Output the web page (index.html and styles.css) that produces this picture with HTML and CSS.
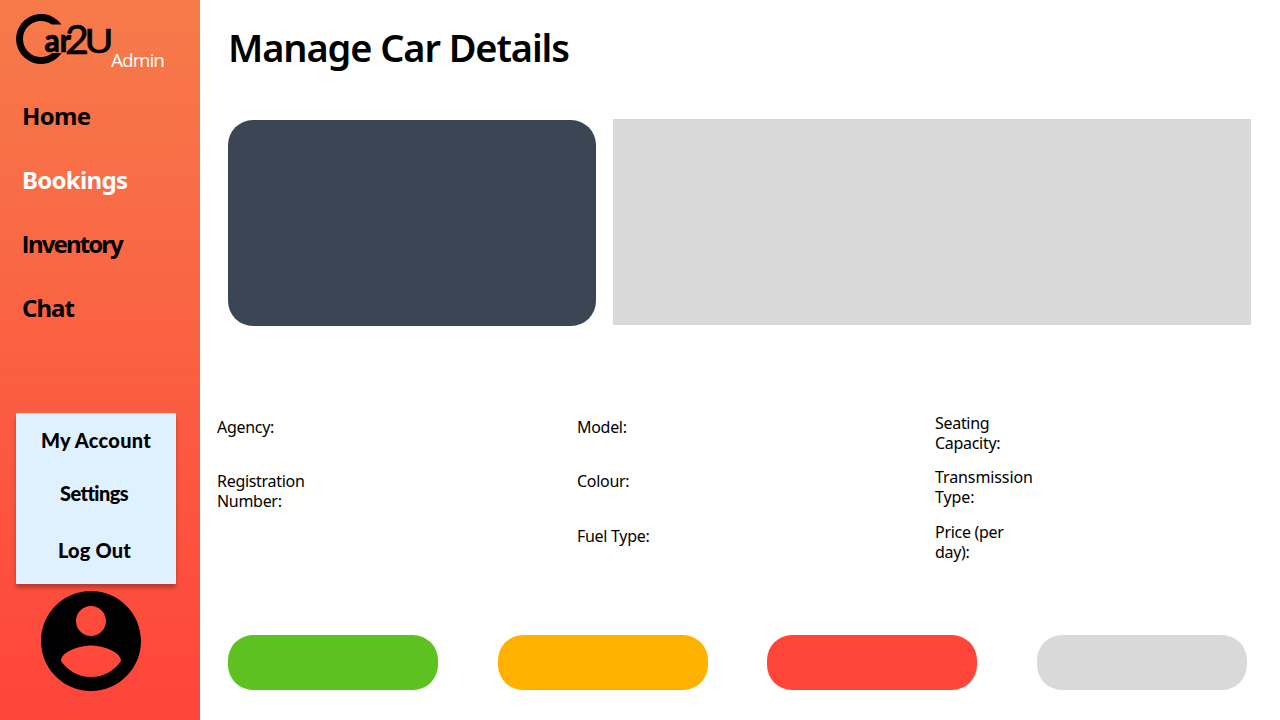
FILE: index.html
```html
<!DOCTYPE html>
<html lang="en">
<head>
<meta charset="utf-8">
<title>Manage Car Details</title>
<link rel="stylesheet" href="styles.css">
</head>
<body>
<div class="app">
  <aside class="sidebar">
    <header class="brand">
      <svg class="logo" width="97" height="52" viewBox="0 0 97 52" role="img" aria-label="Car2U">
        <path class="ring" d="M46.4 11.5H36.7A18 18 0 1 0 37.3 40H46.7A25 25 0 1 1 46.4 11.5Z"/>
        <text class="mark mark-heavy" x="29.5" y="39" font-size="32" textLength="26.5" lengthAdjust="spacingAndGlyphs">ar</text>
        <text class="mark" x="50" y="40.5" font-size="40" textLength="24" lengthAdjust="spacingAndGlyphs">2</text>
        <text class="mark" x="69.5" y="40" font-size="33" textLength="29" lengthAdjust="spacingAndGlyphs">U</text>
      </svg>
      <span class="role">Admin</span>
    </header>
    <nav class="nav">
      <a class="nav-item home">Home</a>
      <a class="nav-item active">Bookings</a>
      <a class="nav-item inventory"><span class="initial">I</span>nventory</a>
      <a class="nav-item chat">Chat</a>
    </nav>
    <div class="account-menu">
      <a class="menu-item account">My Account</a>
      <a class="menu-item settings">Settings</a>
      <a class="menu-item logout">Log Out</a>
    </div>
    <svg class="avatar" width="100" height="100" viewBox="2 2 20 20">
      <path d="M12 2C6.48 2 2 6.48 2 12s4.48 10 10 10 10-4.48 10-10S17.52 2 12 2zm0 3c1.66 0 3 1.34 3 3s-1.34 3-3 3-3-1.34-3-3 1.34-3 3-3zm0 14.2c-2.5 0-4.71-1.28-6-3.22.03-1.99 4-3.08 6-3.08 1.99 0 5.97 1.09 6 3.08-1.29 1.94-3.5 3.22-6 3.22z"/>
    </svg>
  </aside>
  <main class="content">
    <h1 class="title">Manage Car Details</h1>
    <section class="media">
      <div class="photo"></div>
      <div class="summary"></div>
    </section>
    <section class="details">
      <div class="column">
        <div class="field">Agency:</div>
        <div class="field">Registration<br>Number:</div>
      </div>
      <div class="column">
        <div class="field">Model:</div>
        <div class="field">Colour:</div>
        <div class="field">Fuel Type:</div>
      </div>
      <div class="column raised">
        <div class="field">Seating<br>Capacity:</div>
        <div class="field transmission">Transmission<br>Type:</div>
        <div class="field">Price (per<br>day):</div>
      </div>
    </section>
    <section class="actions">
      <div class="button green"></div>
      <div class="button amber"></div>
      <div class="button red"></div>
      <div class="button grey"></div>
    </section>
  </main>
</div>
</body>
</html>
```

FILE: styles.css
```css
* { box-sizing: border-box; }
body { margin: 0; background: #fff; color: #000; font-family: "Noto Sans", "Open Sans", sans-serif; }
.app { display: flex; width: 1280px; height: 720px; overflow: hidden; }
.sidebar { display: flex; flex-direction: column; width: 200px; height: 720px; background: linear-gradient(180deg, #f67b4a 0%, #ff443a 100%); }
.brand { display: flex; align-items: flex-start; height: 84px; padding: 13px 0 0 15px; }
.logo { flex: none; overflow: visible; }
.ring { fill: #000; }
.mark { font-family: Lato, sans-serif; font-weight: 400; fill: #000; stroke: #000; stroke-width: .6; }
.mark-heavy { font-weight: 900; }
.role { margin: 33px 0 0 -1px; color: #fff; font-family: "Open Sans", sans-serif; font-size: 19px; font-weight: 400; line-height: 28px; letter-spacing: -.95px; }
.nav { display: flex; flex-direction: column; height: 329px; padding-left: 22px; }
.nav-item { height: 64px; font-size: 24px; font-weight: 700; line-height: 64px; }
.home { letter-spacing: -.7px; }
.active { color: #fff; letter-spacing: -.7px; }
.inventory { letter-spacing: -1.9px; }
.initial { font-family: Roboto, sans-serif; line-height: 1; letter-spacing: -1px; }
.chat { letter-spacing: -1px; }
.account-menu { display: flex; flex-direction: column; width: 160px; height: 171px; margin-left: 16px; background: #dff1ff; box-shadow: 0 4px 4px rgba(0, 0, 0, .25); font-family: Lato, sans-serif; font-size: 20px; font-weight: 900; }
.menu-item { height: 57px; line-height: 55px; text-align: center; }
.account { letter-spacing: .25px; }
.settings { padding-right: 4px; line-height: 47px; letter-spacing: -.6px; }
.logout { padding-right: 3px; line-height: 47px; letter-spacing: .2px; }
.avatar { flex: none; margin: 7px 0 0 41px; }
.content { flex: 1; display: flex; flex-direction: column; min-width: 0; }
.title { height: 119px; margin: 0; padding: 20px 0 0 28px; font-size: 38px; font-weight: 600; line-height: 54px; letter-spacing: -1.1px; }
.media { display: flex; gap: 17px; height: 295px; padding-left: 28px; }
.photo { width: 368px; height: 206px; margin-top: 1px; border-radius: 25px; background: #3a4653; }
.summary { width: 638px; height: 206px; background: #d9d9d9; }
.details { display: grid; grid-template-columns: 360px 358px 1fr; height: 221px; padding-left: 17px; font-size: 16px; line-height: 20px; letter-spacing: -.3px; }
.column { padding-top: 3px; }
.raised { margin-top: -1px; padding-top: 0; }
.field { height: 54.4px; }
.transmission { letter-spacing: -.1px; }
.actions { display: flex; justify-content: space-between; width: 1019px; margin-left: 28px; }
.button { width: 210px; height: 55px; border-radius: 25px; }
.green { background: #5ec122; }
.amber { background: #ffb100; }
.red { background: #ff443a; }
.grey { background: #d9d9d9; }
```
